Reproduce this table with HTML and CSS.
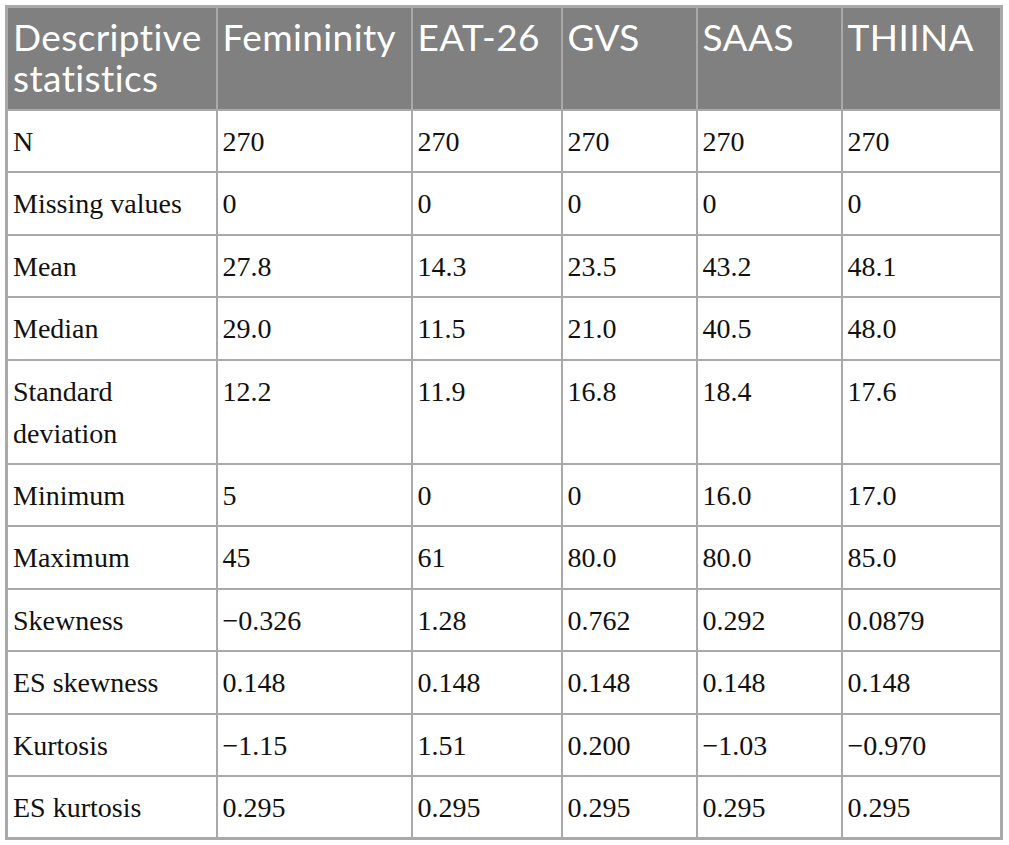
FILE: index.html
```html
<!DOCTYPE html>
<html>
<head>
<meta charset="utf-8">
<link rel="stylesheet" href="styles.css">
</head>
<body>
<table class="stats">
  <colgroup>
    <col class="c1"><col class="c2"><col class="c3"><col class="c4"><col class="c5"><col class="c6">
  </colgroup>
  <thead>
    <tr><th>Descriptive statistics</th><th>Femininity</th><th>EAT-26</th><th>GVS</th><th>SAAS</th><th>THIINA</th></tr>
  </thead>
  <tbody>
    <tr><td>N</td><td>270</td><td>270</td><td>270</td><td>270</td><td>270</td></tr>
    <tr><td>Missing values</td><td>0</td><td>0</td><td>0</td><td>0</td><td>0</td></tr>
    <tr><td>Mean</td><td>27.8</td><td>14.3</td><td>23.5</td><td>43.2</td><td>48.1</td></tr>
    <tr><td>Median</td><td>29.0</td><td>11.5</td><td>21.0</td><td>40.5</td><td>48.0</td></tr>
    <tr><td>Standard deviation</td><td>12.2</td><td>11.9</td><td>16.8</td><td>18.4</td><td>17.6</td></tr>
    <tr><td>Minimum</td><td>5</td><td>0</td><td>0</td><td>16.0</td><td>17.0</td></tr>
    <tr><td>Maximum</td><td>45</td><td>61</td><td>80.0</td><td>80.0</td><td>85.0</td></tr>
    <tr><td>Skewness</td><td>−0.326</td><td>1.28</td><td>0.762</td><td>0.292</td><td>0.0879</td></tr>
    <tr><td>ES skewness</td><td>0.148</td><td>0.148</td><td>0.148</td><td>0.148</td><td>0.148</td></tr>
    <tr><td>Kurtosis</td><td>−1.15</td><td>1.51</td><td>0.200</td><td>−1.03</td><td>−0.970</td></tr>
    <tr><td>ES kurtosis</td><td>0.295</td><td>0.295</td><td>0.295</td><td>0.295</td><td>0.295</td></tr>
  </tbody>
</table>
</body>
</html>
```

FILE: styles.css
```css
html, body {
  margin: 0;
  padding: 0;
  background: #ffffff;
}

body {
  padding: 5px 0 0 5px;
}

.stats {
  border-collapse: collapse;
  table-layout: fixed;
  width: 997px;
  border: 3px solid #a9a9a9;
}

.c1 { width: 210px; }
.c2 { width: 195px; }
.c3 { width: 150px; }
.c4 { width: 135px; }
.c5 { width: 145px; }
.c6 { width: 160px; }

.stats th,
.stats td {
  border: 2px solid #a9a9a9;
  text-align: left;
  vertical-align: top;
}

.stats th {
  background: #808080;
  color: #ffffff;
  font-family: Lato, "Open Sans", sans-serif;
  font-weight: 400;
  font-size: 37px;
  letter-spacing: 0.4px;
  line-height: 41px;
  padding: 8px 2px 11px 5px;
  height: 82px;
}

.stats td {
  font-family: "Liberation Serif", "Times New Roman", serif;
  font-size: 28px;
  line-height: 42px;
  color: #111111;
  padding: 10px 4px 8.4px 5px;
}
```
